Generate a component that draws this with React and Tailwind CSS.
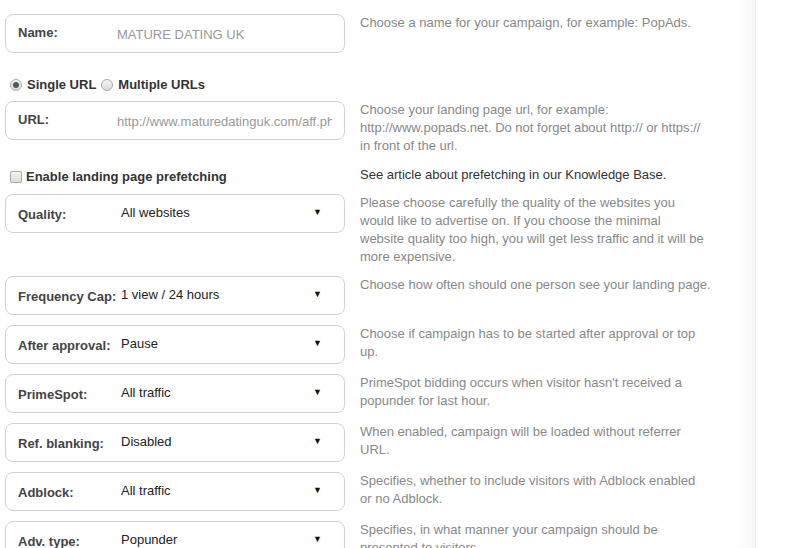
import React from 'react';

const selects = [
    {
        label: 'Quality:',
        value: 'All websites',
        help: [
            'Please choose carefully the quality of the websites you',
            'would like to advertise on. If you choose the minimal',
            'website quality too high, you will get less traffic and it will be',
            'more expensive.',
        ],
    },
    { label: 'Frequency Cap:', value: '1 view / 24 hours', help: ['Choose how often should one person see your landing page.'] },
    { label: 'After approval:', value: 'Pause', help: ['Choose if campaign has to be started after approval or top', 'up.'] },
    { label: 'PrimeSpot:', value: 'All traffic', help: ["PrimeSpot bidding occurs when visitor hasn't received a", 'popunder for last hour.'] },
    { label: 'Ref. blanking:', value: 'Disabled', help: ['When enabled, campaign will be loaded without referrer', 'URL.'] },
    { label: 'Adblock:', value: 'All traffic', help: ['Specifies, whether to include visitors with Adblock enabled', 'or no Adblock.'] },
    { label: 'Adv. type:', value: 'Popunder', help: ['Specifies, in what manner your campaign should be', 'presented to visitors.'] },
];

function Box({ children }) {
    return (
        <div className="w-[340px] h-[39px] shrink-0 flex items-center pl-[12px] pr-[22px] border border-[#cfd1dd] rounded-[8px] bg-white">
            {children}
        </div>
    );
}

// help text keeps the reference's line breaks
function Help({ lines, dark }) {
    return (
        <div className={`w-[360px] text-[13px] leading-[18px] whitespace-nowrap ${dark ? 'text-[#333]' : 'text-[#888]'}`}>
            {lines.map((line) => (
                <p key={line}>{line}</p>
            ))}
        </div>
    );
}

function SelectRow({ label, value, help }) {
    return (
        <div className="flex gap-[15px] mb-[10px]">
            <Box>
                <span className="w-[103px] shrink-0 font-bold text-[#444] mt-[2px]">{label}</span>
                <span className="flex-1 text-[#222] -mt-[2px]">{value}</span>
                <span className="text-[9px] text-[#111] -mt-[2px]">▼</span>
            </Box>
            <Help lines={help} />
        </div>
    );
}

function Radio({ checked }) {
    return (
        <span className="w-[12px] h-[12px] rounded-full border border-[#a9a9a9] bg-gradient-to-b from-[#f4f4f4] to-[#dcdcdc] flex items-center justify-center">
            {checked && <span className="w-[6px] h-[6px] rounded-full bg-[#555]" />}
        </span>
    );
}

export default function App() {
    return (
        <div className="h-[548px] overflow-hidden bg-white font-['Liberation_Sans',Arial,sans-serif] text-[13px]">
            <div className="w-[756px] h-full border-r border-[#ececec] shadow-[inset_-22px_0_20px_-18px_rgba(0,0,0,0.05)] pl-[5px] pt-[14px]">
                <div className="flex gap-[15px]">
                    <Box>
                        <span className="w-[99px] shrink-0 font-bold text-[#444] -mt-[2px]">Name:</span>
                        <span className="text-[#999] mt-[2px]">MATURE DATING UK</span>
                    </Box>
                    <Help lines={['Choose a name for your campaign, for example: PopAds.']} />
                </div>

                <div className="flex items-center gap-[5px] ml-[5px] mt-[23px] mb-[7px] h-[18px] font-bold text-[#333]">
                    <Radio checked />
                    <span>Single URL</span>
                    <Radio />
                    <span>Multiple URLs</span>
                </div>

                <div className="flex gap-[15px]">
                    <Box>
                        <span className="w-[99px] shrink-0 font-bold text-[#444] -mt-[2px]">URL:</span>
                        <span className="flex-1 overflow-hidden whitespace-nowrap text-[#999] mt-[2px] -mr-[10px]">http://www.maturedatinguk.com/aff.php</span>
                    </Box>
                    <Help
                        lines={[
                            'Choose your landing page url, for example:',
                            'http://www.popads.net. Do not forget about http:// or https://',
                            'in front of the url.',
                        ]}
                    />
                </div>

                <div className="flex gap-[15px] mt-[11px] mb-[10px] h-[18px]">
                    <div className="w-[340px] flex items-center gap-[4px] font-bold text-[#333] pt-[3px]">
                        <span className="ml-[5px] w-[12px] h-[12px] rounded-[2px] border border-[#a9a9a9] bg-gradient-to-b from-[#f4f4f4] to-[#dcdcdc]" />
                        <span>Enable landing page prefetching</span>
                    </div>
                    <Help dark lines={['See article about prefetching in our Knowledge Base.']} />
                </div>

                {selects.map((s) => (
                    <SelectRow key={s.label} {...s} />
                ))}
            </div>
        </div>
    );
}
